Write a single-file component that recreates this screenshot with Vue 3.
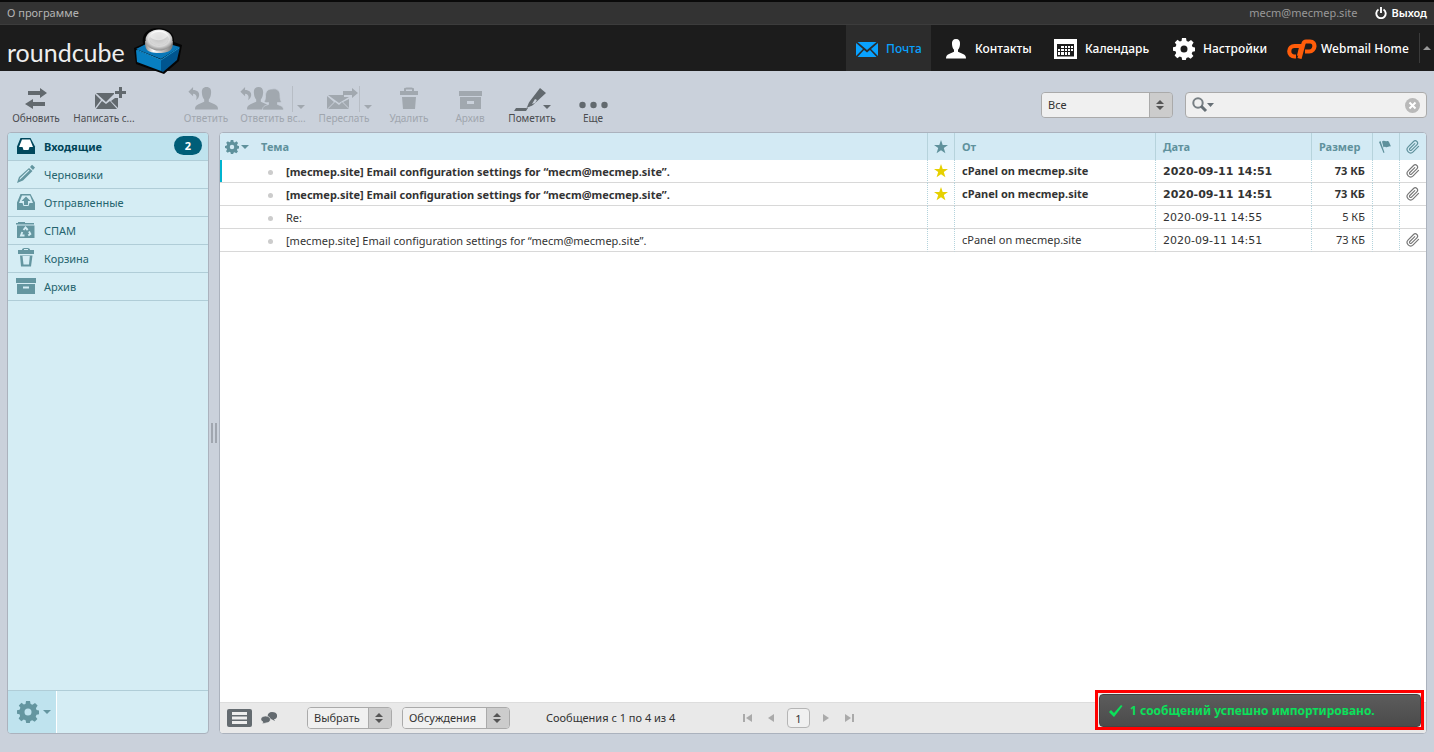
<script setup>
import { ref } from 'vue'

const filter = ref('Все')
const selectMode = ref('Выбрать')
const threadMode = ref('Обсуждения')
const search = ref('')

const folders = [
  { name: 'Входящие', icon: 'inbox', unread: 2 },
  { name: 'Черновики', icon: 'drafts' },
  { name: 'Отправленные', icon: 'sent' },
  { name: 'СПАМ', icon: 'junk' },
  { name: 'Корзина', icon: 'trash' },
  { name: 'Архив', icon: 'archive' }
]

const configSubject = '[mecmep.site] Email configuration settings for “mecm@mecmep.site”.'
const messages = [
  { subject: configSubject, from: 'cPanel on mecmep.site', date: '2020-09-11 14:51', size: '73 КБ', star: true, clip: true, bold: true, focused: true },
  { subject: configSubject, from: 'cPanel on mecmep.site', date: '2020-09-11 14:51', size: '73 КБ', star: true, clip: true, bold: true },
  { subject: 'Re:', from: '', date: '2020-09-11 14:55', size: '5 КБ' },
  { subject: configSubject, from: 'cPanel on mecmep.site', date: '2020-09-11 14:51', size: '73 КБ', clip: true }
]
</script>

<template>
  <div class="app">
    <svg class="defs" width="0" height="0" aria-hidden="true">
      <defs>
        <symbol id="gear" viewBox="0 0 22 22">
          <path fill-rule="evenodd" d="M9 0h4l.6 3 1.800.8L18 2l2.600 2.600-1.700 2.600.7 1.800 2.400.6v3.600l-2.500.6-.8 1.900 1.700 2.400-2.700 2.700-2.500-1.600-1.800.7L12.800 22H9.200l-.6-2.700-1.900-.8-2.400 1.700L1.600 17.500l1.600-2.400-.7-1.900L0 12.700V9.300l2.600-.6.8-1.900L1.800 4.500l2.700-2.700 2.300 1.700 1.700-.6zM11 7.500a3.500 3.500 0 1 0 0 7 3.500 3.500 0 0 0 0-7z" />
        </symbol>
        <symbol id="person" viewBox="0 0 20 20">
          <path d="M10 0c3 0 4.300 2 4 5.200-.2 2.600-.8 4.400-2 5.600v2l5 2.200c2.200 1 3 2 3 4.500H0C0 17 .8 16 3 15l5-2.200v-2C6.800 9.600 6.200 7.800 6 5.200 5.700 2 7 0 10 0z" />
        </symbol>
        <symbol id="mail" viewBox="0 0 22 15">
          <path d="M1.500 0h19L11 8zM0 1l7 6-7 7zM22 1v13l-7-7zM8 8l3 2.500L14 8l6.500 7h-19z" />
        </symbol>
        <symbol id="star" viewBox="0 0 14 14">
          <path d="M7 0l1.700 4.900H14L9.800 8.100 11.400 13.300 7 10.200 2.600 13.300 4.200 8.100 0 4.900h5.300z" />
        </symbol>
        <symbol id="clip" viewBox="0 0 24 24">
          <path d="M21.440 11.050l-9.190 9.190a6 6 0 0 1-8.490-8.490l9.190-9.190a4 4 0 0 1 5.660 5.660l-9.200 9.190a2 2 0 0 1-2.830-2.830l8.490-8.480" fill="none" stroke="currentColor" stroke-width="2" stroke-linecap="round" />
        </symbol>
        <symbol id="updown" viewBox="0 0 8 10">
          <path d="M4 0l4 4H0zM0 6h8l-4 4z" />
        </symbol>
        <symbol id="down" viewBox="0 0 8 4"><path d="M0 0h8L4 4z" /></symbol>
        <symbol id="reply" viewBox="0 0 12 15">
          <path d="M0 5l5-5v3.200c4.500 0 7 2.500 6.500 6-.3 2.300-1.800 4-3.300 5C9.700 10.300 8.300 7.500 5 7.300V10z" />
        </symbol>
      </defs>
    </svg>

    <header>
      <div class="topline">
        <a href="#">О программе</a>
        <span class="user">mecm@mecmep.site</span>
        <a href="#" class="logout">
          <svg width="12" height="12" viewBox="0 0 12 12"><path d="M3.500 2.500a4.700 4.700 0 1 0 5 0M6 0v6" fill="none" stroke="#fff" stroke-width="1.900" /></svg>
          Выход
        </a>
      </div>
      <div class="topnav">
        <a href="#" class="logo" aria-label="roundcube">
          <span>roundcube</span>
          <svg width="50" height="48" viewBox="0 0 50 48">
            <defs>
              <radialGradient id="ball" cx=".5" cy=".4" r=".6"><stop offset="0" stop-color="#c8c8c8" /><stop offset=".55" stop-color="#f7f7f7" /><stop offset="1" stop-color="#8d8d8d" /></radialGradient>
              <linearGradient id="ring" x1="0" x2="1"><stop offset="0" stop-color="#8a8a8a" /><stop offset=".3" stop-color="#fff" /><stop offset="1" stop-color="#777" /></linearGradient>
            </defs>
            <path d="M1 21L10 17C8 7 15 1 25 1s17 6 16 14l8 3-3 16-15 13L3 37z" fill="#050505" />
            <path d="M3 23l25 10v11L4 35z" fill="#087fc1" />
            <path d="M28 33l19-13-3 13-14 12-2-1z" fill="#00558f" />
            <path d="M3 22l10-5h23l11 3-19 12z" fill="#0877b8" />
            <path d="M4 23l24 10 18-12" fill="none" stroke="#1c8fcb" />
            <path d="M12 14c0 8 1 12 14 12s14-5 14-12z" fill="url(#ring)" />
            <ellipse cx="26" cy="13" rx="13.500" ry="10.500" fill="url(#ball)" />
            <ellipse cx="26" cy="12" rx="10" ry="7" fill="#bbb" opacity=".55" />
            <path d="M17 10c2-8 16-8 18-1-5 5-12 6-18 1z" fill="#fff" opacity=".5" />
          </svg>
        </a>
        <nav>
          <a href="#" class="tab mail"><svg width="22" height="15" fill="#09a2ff"><use href="#mail" /></svg>Почта</a>
          <a href="#" class="tab contacts"><svg width="20" height="20" fill="#fff"><use href="#person" /></svg>Контакты</a>
          <a href="#" class="tab calendar">
            <svg width="23" height="20" viewBox="0 0 23 20"><path d="M0 0h23v20H0z" fill="#fff" /><path d="M3 5h17v12.500H3z" fill="#1c1c1c" /><path d="M7 7h3v2H7zM11 7h2v2h-2zM14 7h2v2h-2zM17 7h2v2h-2zM4 10h2v2H4zM7 10h3v2H7zM11 10h2v2h-2zM14 10h2v2h-2zM17 10h2v2h-2zM4 13h2v3H4zM7 13h3v3H7zM11 13h2v3h-2zM14 13h2v3h-2z" fill="#fff" /></svg>Календарь
          </a>
          <a href="#" class="tab settings"><svg width="22" height="22" fill="#fff"><use href="#gear" /></svg>Настройки</a>
          <a href="#" class="tab webmail">
            <svg width="30" height="20" viewBox="0 0 30 20"><path d="M14.500 7H7.500a4.500 4.500 0 0 0 0 10.500H9M12.500 19.500l4-15c.4-1.500 1-2 2.500-2h4c6.500 0 5.500 10-.8 10h-4.200M14.500 7L12 17" fill="none" stroke="#ff5d0a" stroke-width="4.200" /></svg>Webmail Home
          </a>
          <button class="collapse" aria-label="Свернуть"><svg width="8" height="4" viewBox="0 0 8 4"><path d="M4 0l4 4H0z" fill="#999" /></svg></button>
        </nav>
      </div>
    </header>

    <div class="toolbar">
      <button class="tool w56"><svg width="56" height="26" viewBox="8 86 56 26"><path d="M28 91h12v-3l7 5-7 5v-3H28zM45 102H33v-3l-8 5 8 5v-3h12z" /></svg>Обновить</button>
      <button class="tool w80"><svg width="80" height="26" viewBox="64 86 80 26"><path d="M96 93h18v1l-8 8zM95 94l6 6-6 8zM118 98v10l-7-7 4-3zM96 109l6-8 4 3 4-3 7 8zM119 87h3v4h4v3h-4v4h-3v-4h-4v-3h4z" /></svg>Написать с...</button>
      <button class="tool off w60 split"><svg width="60" height="26" viewBox="176 86 60 26"><use href="#reply" x="188" y="87" width="12" height="14" /><use href="#person" x="195" y="87" width="23" height="23" /></svg>Ответить</button>
      <button class="tool off w74">
        <svg width="74" height="26" viewBox="236 86 74 26"><use href="#reply" x="240" y="87" width="12" height="14" /><use href="#person" x="247" y="87" width="23" height="23" /><path d="M272 89c5-1 8 2 8 6 0 3 .3 5 1.500 7-1.500.7-3 .7-4 .5v2c4 1.500 6 2 6 5.500h-21c0-3.500 2-4.300 6-5.500v-2c-1.500.3-3 .2-4.500-.7 1.500-2 1.500-4 1.500-6 0-4 2-7 6.500-6.800z" stroke="#cad1db" stroke-width=".7" /><path d="M292 86h1v26h-1z" fill="#b7bdc5" /><use href="#down" x="297" y="105" width="8" height="4" /></svg>Ответить вс...
      </button>
      <button class="tool off w68">
        <svg width="68" height="26" viewBox="310 86 68 26"><path d="M328 95h16v2h5l-10 6zM327 96l7 6-7 7zM349 99v9l-6-6zM328 109l7-7 4 3 3-3 7 7zM343 91h9v-3l6 5-6 5v-3h-9z" /><path d="M359 86h1v26h-1z" fill="#b7bdc5" /><use href="#down" x="364" y="105" width="8" height="4" /></svg>Переслать
      </button>
      <button class="tool off w62"><svg width="62" height="26" viewBox="378 86 62 26"><path fill-rule="evenodd" d="M400 91h4v-2c0-1 1-1.500 5-1.500s5 .5 5 1.500v2h4v4h-18zM406 91h6v-1.500h-6zM402 97h14l-1 12h-12z" /></svg>Удалить</button>
      <button class="tool off w60"><svg width="60" height="26" viewBox="440 86 60 26"><path fill-rule="evenodd" d="M459 91h23v5h-23zM460 97h21v12h-21zM467 101v3h7v-3z" /></svg>Архив</button>
      <button class="tool w64"><svg width="64" height="26" viewBox="500 86 64 26"><path fill-rule="evenodd" d="M516 108h12l-2 3h-12zM526 109c2-3 2-6 4-8l10-13 6 5-13 12c-2 2-5 1-7 4zM532 104l3-1 2-3-2-1z" /><use href="#down" x="543" y="105" width="8" height="4" /></svg>Пометить</button>
      <button class="tool w58"><svg width="58" height="26" viewBox="564 86 58 26"><circle cx="582.500" cy="105" r="3.200" /><circle cx="593.500" cy="105" r="3.200" /><circle cx="604.500" cy="105" r="3.200" /></svg>Еще</button>

      <div class="finder">
        <div class="dropdown filter">
          <select v-model="filter" aria-label="Фильтр"><option>Все</option></select>
          <svg width="8" height="10"><use href="#updown" /></svg>
        </div>
        <div class="search">
          <svg width="22" height="16" viewBox="0 0 22 16"><circle cx="6" cy="6" r="4.700" fill="none" stroke="#777f84" stroke-width="2" /><path d="M9 9l5 5" stroke="#666f75" stroke-width="3" /><path d="M15 6h7l-3.500 4z" fill="#666f75" /></svg>
          <input v-model="search" type="text" aria-label="Поиск" />
          <button aria-label="Очистить"><svg width="15" height="15" viewBox="0 0 15 15"><circle cx="7.500" cy="7.500" r="7.500" fill="#b9b9b9" /><path d="M4.500 4.500l6 6M10.500 4.500l-6 6" stroke="#fff" stroke-width="2" /></svg></button>
        </div>
      </div>
    </div>

    <main>
      <aside>
        <ul>
          <li v-for="f in folders" :key="f.name" :class="{ selected: f.unread }">
            <a href="#">
              <svg width="20" height="20" viewBox="0 0 20 20">
                <template v-if="f.icon === 'inbox'"><path d="M4.500 2h10L19 10.500V18H1v-7.500z" /><path class="tray" d="M6 3.500L3 11h3.500l1 3h5l1-3H17l-3-7.500z" /></template>
                <path v-else-if="f.icon === 'drafts'" fill-rule="evenodd" d="M1 19l2-6L13 4l3.500 3L7 16.500zM3.500 16l10-9.500-.8-.7L4 14zM14 3l2-2.300 3 2.800-2 2.500z" />
                <path v-else-if="f.icon === 'sent'" fill-rule="evenodd" d="M4.500 2h10L19 10.500V18H1v-7.500zM6 3.500L3 11h3.500l1 3h5l1-3H17l-3-7.500zM10 4.500l4.500 4.500H12v4H8V9H5.500z" />
                <template v-else-if="f.icon === 'junk'"><path d="M0 3h2V2h7v1h9v1.500H0zM1 5.500h17.500V18H1z" /><path d="M7.500 10l2-2.500 2.200 2.500M13 11.500l1.300 2.500-2 1.500M8.500 15.500H5l1.300-3.500" fill="none" stroke="#d4edf4" stroke-width="1.900" /></template>
                <path v-else-if="f.icon === 'trash'" fill-rule="evenodd" d="M2 2h4c0-1.500 1-2 4-2s4 .5 4 2h4v4H2zM8 2h4V1H8zM4 7.500h12.500L15 18.500H5zM6.500 8l1 8.500h5.500l.8-8.500z" />
                <path v-else fill-rule="evenodd" d="M0 2h20v5H0zM1 8h18v10H1zM7 10.500V12.500h6v-2z" />
              </svg>
              {{ f.name }}
              <span v-if="f.unread" class="badge">{{ f.unread }}</span>
            </a>
          </li>
        </ul>
        <div class="asidefoot">
          <button aria-label="Действия с папками"><svg width="22" height="22"><use href="#gear" /></svg><svg width="8" height="4"><use href="#down" /></svg></button>
        </div>
      </aside>
      <div class="splitter"></div>
      <section>
        <table>
          <colgroup><col /><col class="c27" /><col class="cfrom" /><col class="cdate" /><col class="csize" /><col class="c27" /><col class="c27" /></colgroup>
          <thead>
            <tr>
              <th>
                <div class="subjecthead"><button aria-label="Настройка списка"><svg width="14" height="14"><use href="#gear" /></svg><svg width="8" height="4"><use href="#down" /></svg></button>Тема</div>
              </th>
              <th class="icon"><svg width="14" height="14"><use href="#star" /></svg></th>
              <th>От</th>
              <th>Дата</th>
              <th class="size">Размер</th>
              <th class="icon"><svg width="12" height="14" viewBox="0 0 12 14"><path d="M0 2l1.500-1 4 11.500-1 .5zM3 1.500c2-2 3.500.5 5-.5 1-.3 1.500 0 2 1l2 4.500c-2-1-3.500 1.500-5.500.5-1-.5-1.500 0-2 .5z" /></svg></th>
              <th class="icon"><svg class="hollow" width="14" height="14"><use href="#clip" /></svg></th>
            </tr>
          </thead>
          <tbody>
            <tr v-for="(m, i) in messages" :key="i" :class="{ bold: m.bold, focused: m.focused }">
              <td><div class="subject"><i></i>{{ m.subject }}</div></td>
              <td class="icon"><svg v-if="m.star" class="gold" width="14" height="14"><use href="#star" /></svg></td>
              <td>{{ m.from }}</td>
              <td class="date">{{ m.date }}</td>
              <td class="size">{{ m.size }}</td>
              <td></td>
              <td class="icon"><svg v-if="m.clip" width="14" height="14"><use href="#clip" /></svg></td>
            </tr>
          </tbody>
        </table>
        <footer>
          <button class="mode list" aria-label="Список"><svg width="25" height="18" viewBox="0 0 25 18"><rect width="25" height="18" rx="2" fill="#646b70" /><path d="M5 3h15v3H5zM5 7.500h15v3H5zM5 12h15v3H5z" fill="#eee" /></svg></button>
          <button class="mode threads" aria-label="Обсуждения"><svg width="16" height="13" viewBox="0 0 16 13"><path d="M11 0c7 0 6 7 2 7l1 2-4-2C5 6 6 0 11 0z" /><path d="M4.500 4C11 4 11 11 5 11l-4 1 1-2C-2 8 0 4 4.500 4z" stroke="#e9e9e9" stroke-width=".7" /></svg></button>
          <div class="dropdown pick">
            <select v-model="selectMode" aria-label="Выбрать"><option>Выбрать</option></select>
            <svg width="8" height="10"><use href="#updown" /></svg>
          </div>
          <div class="dropdown talk">
            <select v-model="threadMode" aria-label="Обсуждения"><option>Обсуждения</option></select>
            <svg width="8" height="10"><use href="#updown" /></svg>
          </div>
          <span class="count">Сообщения с 1 по 4 из 4</span>
          <div class="pager">
            <button aria-label="Первая"><svg width="9" height="8" viewBox="0 0 9 8"><path d="M0 0h2v8H0zM9 0v8L3 4z" /></svg></button>
            <button aria-label="Назад"><svg width="7" height="8" viewBox="0 0 7 8"><path d="M6 0v8L0 4z" /></svg></button>
            <input type="text" value="1" aria-label="Страница" />
            <button aria-label="Вперед"><svg width="7" height="8" viewBox="0 0 7 8"><path d="M1 0v8l6-4z" /></svg></button>
            <button aria-label="Последняя"><svg width="9" height="8" viewBox="0 0 9 8"><path d="M7 0h2v8H7zM0 0v8l6-4z" /></svg></button>
          </div>
        </footer>
      </section>
    </main>

    <div class="notice" role="status">
      <div>
        <svg width="14" height="12" viewBox="0 0 14 12"><path d="M0 7l2-2 3 3 7-8 1.500 1L5 12z" fill="#0be05a" /></svg>
        1 сообщений успешно импортировано.
      </div>
    </div>
  </div>
</template>

<style>
body { margin: 0; background: #cad1db; }
</style>

<style scoped>
* { box-sizing: border-box; }
.app { position: relative; display: flex; flex-direction: column; height: 100vh; font: 11px/16px "Noto Sans", "Open Sans", sans-serif; color: #333; background: #cad1db; overflow: hidden; }
.defs { position: absolute; }
svg { display: block; flex: none; }
a { color: inherit; text-decoration: none; }
button { border: 0; padding: 0; margin: 0; background: none; font: inherit; color: inherit; }
.topline { display: flex; align-items: center; height: 25px; padding: 0 7px; border-top: 2px solid #0a0a0a; border-bottom: 1px solid #3c3c3c; background: #333; color: #b3b3b3; }
.user { margin-left: auto; color: #999; }
.logout { display: flex; align-items: center; gap: 4px; margin-left: 18px; color: #fff; font-weight: 600; }
.topnav { display: flex; justify-content: space-between; height: 46px; background: #1c1c1c; }
.logo { display: flex; padding-left: 7px; }
.logo span { width: 126px; color: #eee; font: 400 25px/54px "Lato", sans-serif; }
.logo svg { margin-top: 2px; z-index: 1; }
nav { display: flex; gap: 5px; color: #fff; font-size: 12px; font-weight: 500; }
.tab { display: flex; align-items: center; gap: 9px; padding: 2px 0 0 10px; white-space: nowrap; }
.mail { width: 85px; gap: 8px; background: #2c2c2c; color: #09a2ff; }
.contacts { width: 103px; }
.calendar { width: 114px; gap: 8px; }
.settings { width: 109px; gap: 8px; }
.webmail { width: 137px; gap: 4px; }
.collapse { display: flex; align-items: center; justify-content: flex-end; width: 15px; height: 30px; margin-top: 8px; border-left: 1px solid #3a3a3a; padding-right: 3px; }
.toolbar { display: flex; flex: none; height: 61px; padding: 15px 7px 0 8px; }
.tool { display: block; flex: none; height: 38px; color: #4a4c50; font-size: 10px; line-height: 12px; white-space: nowrap; text-align: center; }
.tool svg { fill: #62696e; }
.tool.off { color: #a0a6ae; }
.tool.off svg { fill: #a1a8af; }
.w56 { width: 56px; }
.w58 { width: 58px; }
.w60 { width: 60px; }
.w62 { width: 62px; }
.w64 { width: 64px; }
.w68 { width: 68px; }
.w74 { width: 74px; }
.w80 { width: 80px; }
.split { margin-left: 32px; }
.finder { display: flex; gap: 12px; height: 26px; margin: 6px 0 0 auto; }
.dropdown { position: relative; border: 1px solid #aaa; border-radius: 4px; overflow: hidden; background: #f0f0f0; }
.dropdown select { display: block; width: 100%; height: 100%; padding: 0 24px 0 6px; border: 0; appearance: none; background: linear-gradient(to left, #ccc 22px, #aaa 22px, #aaa 23px, #f0f0f0 23px); font: inherit; color: #333; }
.dropdown svg { position: absolute; right: 8px; top: 50%; margin-top: -5px; fill: #555; pointer-events: none; }
.filter { width: 132px; }
.search { display: flex; align-items: center; width: 242px; padding: 0 6px; border: 1px solid #aaa; border-radius: 4px; background: #f0f0f0; }
.search input { flex: 1; min-width: 0; height: 22px; border: 0; background: none; font: inherit; }
main { display: flex; flex: 1; min-height: 0; padding: 0 7px 18px; }
aside { display: flex; flex-direction: column; width: 202px; flex: none; border: 1px solid #abb2bd; border-radius: 4px; overflow: hidden; background: #d5edf4; color: #25646e; }
ul { flex: 1; margin: 0; padding: 0; list-style: none; }
li { height: 28px; border-bottom: 1px solid #b0cdd7; }
li a { display: flex; align-items: center; gap: 8px; height: 27px; padding: 0 6px 0 8px; }
li svg { fill: #6496a0; margin-top: -1px; }
.selected { background: #bfe3ee; color: #004458; font-weight: 700; }
.selected svg { fill: #00485d; }
.tray { fill: #fff; }
.badge { width: 28px; height: 19px; margin: -2px 0 0 auto; border-radius: 10px; background: #005e78; color: #fff; line-height: 19px; text-align: center; }
.asidefoot { height: 43px; border-top: 1px solid #b0cdd7; }
.asidefoot button { display: flex; align-items: center; gap: 4px; width: 49px; height: 42px; padding-left: 9px; border-right: 1px solid #fff; background: #bfe3ee; }
.asidefoot svg { fill: #6496a0; }
.splitter { align-self: center; width: 6px; height: 20px; margin: 0 2px 0 2px; border: solid #a0a6af; border-width: 0 2px; }
section { display: flex; flex-direction: column; flex: 1; min-width: 0; border: 1px solid #abb2bd; border-radius: 4px; overflow: hidden; background: #fff; }
table { width: 100%; table-layout: fixed; border-collapse: separate; border-spacing: 0; }
.c27 { width: 27px; }
.cfrom { width: 201px; }
.cdate { width: 156px; }
.csize { width: 61px; }
th { height: 27px; padding: 0 7px; background: #d3eaf4; color: #5f919c; text-align: left; font-weight: 700; }
th + th { border-left: 1px solid #b6d3dc; }
th svg { fill: #5f919c; }
td { height: 23px; padding: 0 7px; border-bottom: 1px solid #d8d8d8; white-space: nowrap; color: #333; }
td + td { border-left: 1px dotted #b3d3dc; }
.icon { padding: 0 6px; color: #5f919c; }
td.icon { color: #777; }
.date { padding-top: 2px; font-family: "DejaVu Sans", sans-serif; }
.size { text-align: right; }
th.size { text-align: left; padding-right: 0; }
th:first-child { padding: 0 5px; }
td:first-child { padding: 0; }
.subjecthead, .subjecthead button, .subject { display: flex; align-items: center; }
.subjecthead button { width: 36px; gap: 2px; }
.subject { height: 22px; padding: 2px 0 0 48px; }
.subject i { width: 5px; height: 5px; margin-right: 13px; border-radius: 50%; background: #ccc; }
.focused .subject { padding-left: 46px; border-left: 2px solid #00b4d0; }
.bold td { font-weight: 700; }
.gold { fill: #e6d000; }
footer { display: flex; align-items: center; height: 31px; margin-top: auto; padding-left: 7px; border-top: 1px solid #ddd; background: #e9e9e9; }
.threads { margin: 0 30px 0 9px; }
.threads svg { fill: #646b70; }
footer .dropdown { height: 22px; }
.pick { width: 85px; margin-right: 10px; }
.talk { width: 108px; }
.count { width: 233px; padding-left: 36px; white-space: nowrap; }
.pager { display: flex; align-items: center; }
.pager button { width: 9px; margin-right: 15px; }
.pager svg { margin: auto; fill: #aaa; }
.pager input { width: 23px; height: 20px; padding: 0; margin: 0 11px 0 -4px; border: 1px solid #b5b5b5; border-radius: 4px; background: #f0f0f0; font: inherit; color: #333; text-align: center; }
.notice { position: absolute; right: 10px; bottom: 22px; width: 329px; height: 40px; padding: 1px 0 0 1px; border: 3px solid #f00; background: #eee; }
.notice div { display: flex; align-items: center; gap: 7px; height: 33px; padding-left: 9px; border: 1px solid #444; border-radius: 4px; background: linear-gradient(#5c5c5c, #4b4b4b); color: #0be05a; font-size: 12px; font-weight: 700; white-space: nowrap; }
</style>
